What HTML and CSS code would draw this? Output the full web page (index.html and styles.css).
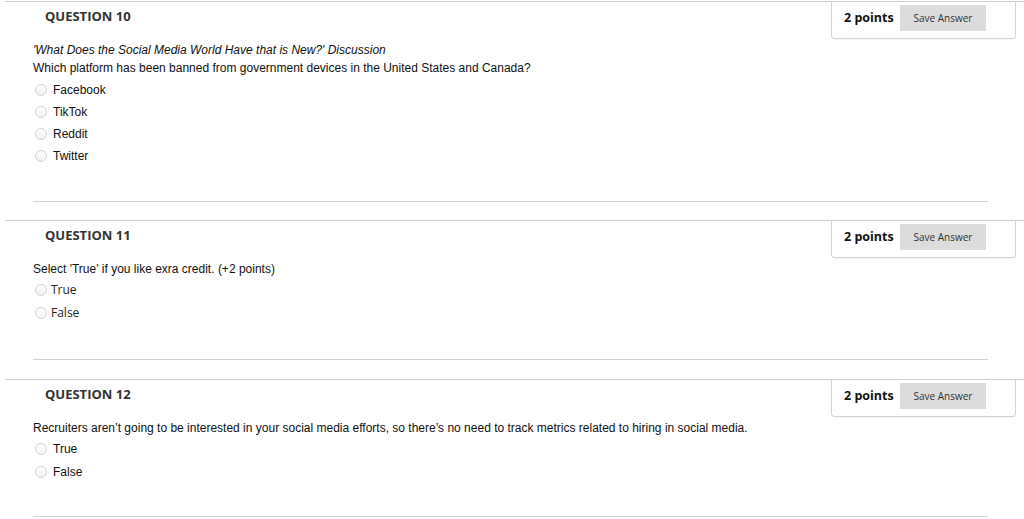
FILE: index.html
```html
<!DOCTYPE html>
<html>
<head>
<meta charset="utf-8">
<link rel="stylesheet" href="styles.css">
</head>
<body>
<div class="page">
  <section class="question q10">
    <div class="q-head">
      <h2 class="q-title">QUESTION 10</h2>
      <div class="points-box">
        <span class="points">2 points</span>
        <button class="save">Save Answer</button>
      </div>
    </div>
    <div class="q-body">
      <p class="line italic">'What Does the Social Media World Have that is New?' Discussion</p>
      <p class="line">Which platform has been banned from government devices in the United States and Canada?</p>
      <ul class="options arial">
        <li><span class="radio"></span><span class="label">Facebook</span></li>
        <li><span class="radio"></span><span class="label">TikTok</span></li>
        <li><span class="radio"></span><span class="label">Reddit</span></li>
        <li><span class="radio"></span><span class="label">Twitter</span></li>
      </ul>
    </div>
    <div class="sep sep10"></div>
  </section>

  <section class="question q11">
    <div class="q-head">
      <h2 class="q-title">QUESTION 11</h2>
      <div class="points-box">
        <span class="points">2 points</span>
        <button class="save">Save Answer</button>
      </div>
    </div>
    <div class="q-body">
      <p class="line">Select 'True' if you like exra credit. (+2 points)</p>
      <ul class="options opensans">
        <li><span class="radio"></span><span class="label">True</span></li>
        <li><span class="radio"></span><span class="label">False</span></li>
      </ul>
    </div>
    <div class="sep sep11"></div>
  </section>

  <section class="question q12">
    <div class="q-head">
      <h2 class="q-title">QUESTION 12</h2>
      <div class="points-box">
        <span class="points">2 points</span>
        <button class="save">Save Answer</button>
      </div>
    </div>
    <div class="q-body">
      <p class="line">Recruiters aren’t going to be interested in your social media efforts, so there’s no need to track metrics related to hiring in social media.</p>
      <ul class="options arial">
        <li><span class="radio"></span><span class="label">True</span></li>
        <li><span class="radio"></span><span class="label">False</span></li>
      </ul>
    </div>
    <div class="sep sep12"></div>
  </section>
</div>
</body>
</html>
```

FILE: styles.css
```css
html, body {
  margin: 0;
  padding: 0;
  background: #fff;
}
body {
  font-family: "Liberation Sans", Arial, sans-serif;
  color: #111;
  width: 1024px;
  height: 519px;
  overflow: hidden;
}
.page {
  padding-top: 1px;
}
.question {
  border-top: 1px solid #cfcfcf;
  margin-left: 5px;
}
.q-head {
  display: flex;
  justify-content: space-between;
  align-items: flex-start;
  height: 37px;
}
.q-title {
  margin: 0;
  padding: 6px 0 0 40px;
  font-family: "Open Sans", sans-serif;
  font-weight: 700;
  font-size: 13px;
  line-height: 16px;
  color: #333;
}
.points-box {
  box-sizing: border-box;
  width: 185px;
  height: 37px;
  margin-right: 8px;
  border: 1px solid #d4d4d4;
  border-top: none;
  border-radius: 0 0 4px 4px;
  display: flex;
  align-items: flex-start;
  padding: 3px 0 0 12px;
  box-shadow: 0 1px 1px rgba(0,0,0,0.04);
}
.points {
  font-family: "Open Sans", sans-serif;
  font-weight: 700;
  font-size: 12.5px;
  line-height: 26px;
  color: #111;
  width: 56px;
}
.save {
  width: 86px;
  height: 26px;
  border: none;
  border-radius: 0;
  background: #dcdcdc;
  font-family: "Open Sans", sans-serif;
  font-size: 10px;
  color: #333;
  padding: 0;
  margin: 0;
}
.q-body {
  padding-left: 28px;
}
.q10 .q-body { padding-top: 2px; }
.q11 .q-body { padding-top: 2px; }
.q12 .q-body { padding-top: 2px; }
.line {
  margin: 0;
  font-size: 12px;
  line-height: 18px;
  color: #111;
}
.italic {
  font-style: italic;
}
.options {
  list-style: none;
  margin: 2px 0 0 0;
  padding: 0;
}
.options li {
  display: flex;
  align-items: center;
  height: 22px;
}
.q11 .options li,
.q12 .options li {
  height: 23px;
}
.q11 .options { margin-top: 0; }
.q12 .options { margin-top: 0; }
.radio {
  box-sizing: border-box;
  width: 12px;
  height: 12px;
  border-radius: 50%;
  border: 1px solid #d2d2d2;
  background: linear-gradient(#ffffff, #f2f2f2);
  margin-left: 2px;
  flex: none;
}
.label {
  margin-left: 6px;
  font-size: 12px;
  color: #111;
}
.opensans .label {
  font-family: "Open Sans", sans-serif;
  margin-left: 4px;
  color: #222;
}
.sep {
  height: 1px;
  background: #d0d0d0;
  margin-left: 28px;
  width: 955px;
}
.sep10 { margin-top: 34px; margin-bottom: 18px; }
.sep11 { margin-top: 35px; margin-bottom: 19px; }
.sep12 { margin-top: 33px; }
```
